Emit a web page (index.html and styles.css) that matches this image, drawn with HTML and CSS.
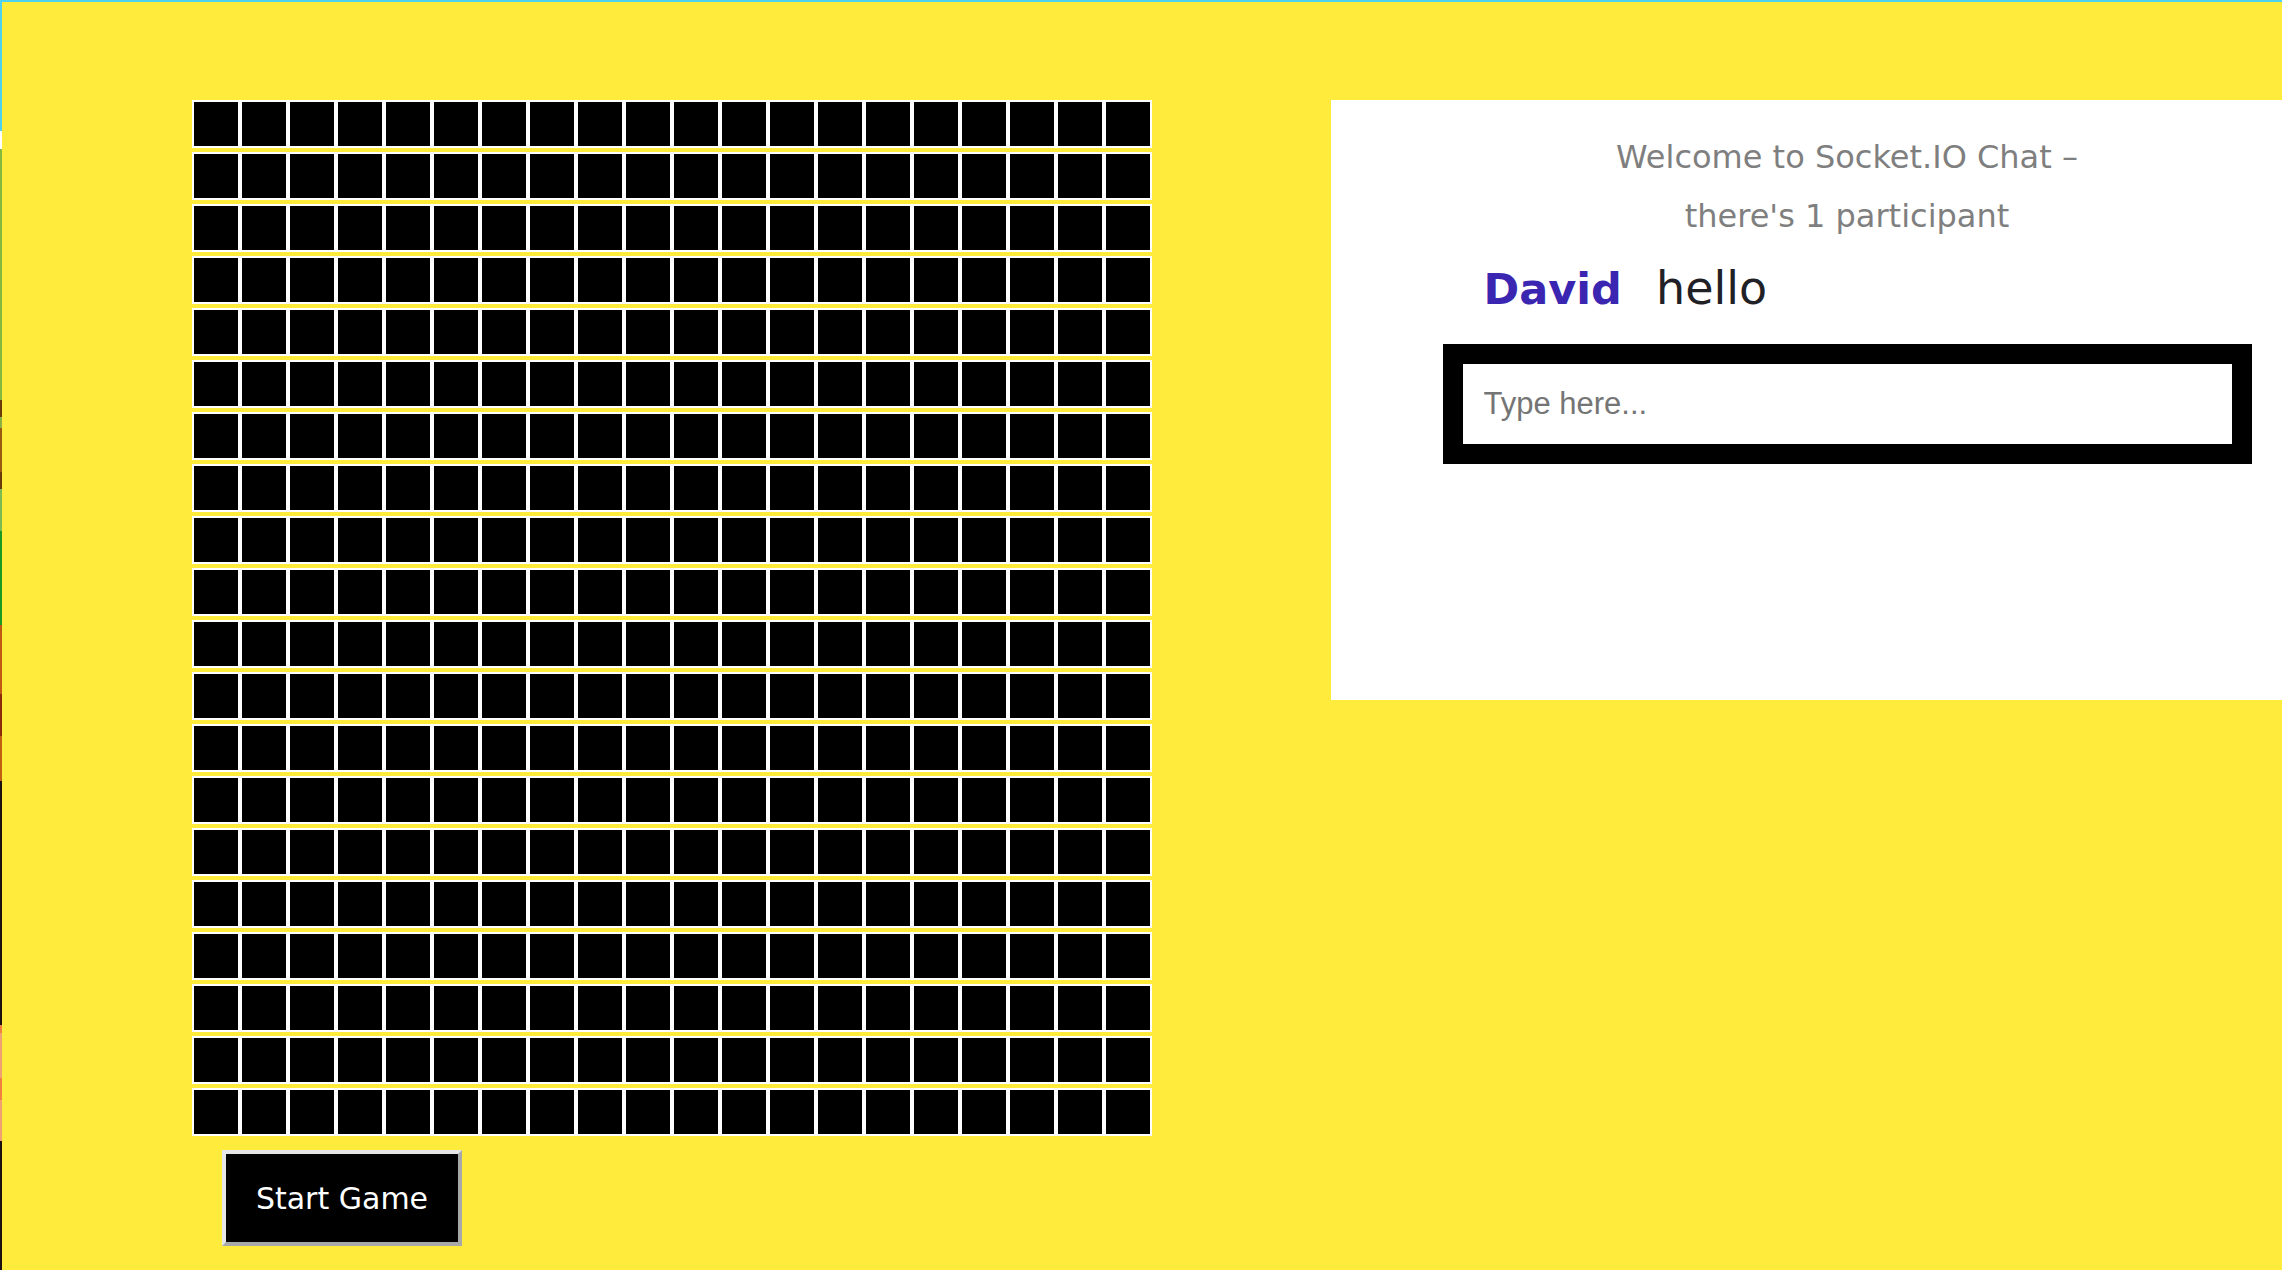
FILE: index.html
```html
<!DOCTYPE html>
<html lang="en">
<head>
<meta charset="utf-8">
<title>Game</title>
<link rel="stylesheet" href="styles.css">
</head>
<body>
<div class="page">
  <section class="game">
    <div class="board">
      <div class="row"><div class="cell"></div><div class="cell"></div><div class="cell"></div><div class="cell"></div><div class="cell"></div><div class="cell"></div><div class="cell"></div><div class="cell"></div><div class="cell"></div><div class="cell"></div><div class="cell"></div><div class="cell"></div><div class="cell"></div><div class="cell"></div><div class="cell"></div><div class="cell"></div><div class="cell"></div><div class="cell"></div><div class="cell"></div><div class="cell"></div></div>
      <div class="row"><div class="cell"></div><div class="cell"></div><div class="cell"></div><div class="cell"></div><div class="cell"></div><div class="cell"></div><div class="cell"></div><div class="cell"></div><div class="cell"></div><div class="cell"></div><div class="cell"></div><div class="cell"></div><div class="cell"></div><div class="cell"></div><div class="cell"></div><div class="cell"></div><div class="cell"></div><div class="cell"></div><div class="cell"></div><div class="cell"></div></div>
      <div class="row"><div class="cell"></div><div class="cell"></div><div class="cell"></div><div class="cell"></div><div class="cell"></div><div class="cell"></div><div class="cell"></div><div class="cell"></div><div class="cell"></div><div class="cell"></div><div class="cell"></div><div class="cell"></div><div class="cell"></div><div class="cell"></div><div class="cell"></div><div class="cell"></div><div class="cell"></div><div class="cell"></div><div class="cell"></div><div class="cell"></div></div>
      <div class="row"><div class="cell"></div><div class="cell"></div><div class="cell"></div><div class="cell"></div><div class="cell"></div><div class="cell"></div><div class="cell"></div><div class="cell"></div><div class="cell"></div><div class="cell"></div><div class="cell"></div><div class="cell"></div><div class="cell"></div><div class="cell"></div><div class="cell"></div><div class="cell"></div><div class="cell"></div><div class="cell"></div><div class="cell"></div><div class="cell"></div></div>
      <div class="row"><div class="cell"></div><div class="cell"></div><div class="cell"></div><div class="cell"></div><div class="cell"></div><div class="cell"></div><div class="cell"></div><div class="cell"></div><div class="cell"></div><div class="cell"></div><div class="cell"></div><div class="cell"></div><div class="cell"></div><div class="cell"></div><div class="cell"></div><div class="cell"></div><div class="cell"></div><div class="cell"></div><div class="cell"></div><div class="cell"></div></div>
      <div class="row"><div class="cell"></div><div class="cell"></div><div class="cell"></div><div class="cell"></div><div class="cell"></div><div class="cell"></div><div class="cell"></div><div class="cell"></div><div class="cell"></div><div class="cell"></div><div class="cell"></div><div class="cell"></div><div class="cell"></div><div class="cell"></div><div class="cell"></div><div class="cell"></div><div class="cell"></div><div class="cell"></div><div class="cell"></div><div class="cell"></div></div>
      <div class="row"><div class="cell"></div><div class="cell"></div><div class="cell"></div><div class="cell"></div><div class="cell"></div><div class="cell"></div><div class="cell"></div><div class="cell"></div><div class="cell"></div><div class="cell"></div><div class="cell"></div><div class="cell"></div><div class="cell"></div><div class="cell"></div><div class="cell"></div><div class="cell"></div><div class="cell"></div><div class="cell"></div><div class="cell"></div><div class="cell"></div></div>
      <div class="row"><div class="cell"></div><div class="cell"></div><div class="cell"></div><div class="cell"></div><div class="cell"></div><div class="cell"></div><div class="cell"></div><div class="cell"></div><div class="cell"></div><div class="cell"></div><div class="cell"></div><div class="cell"></div><div class="cell"></div><div class="cell"></div><div class="cell"></div><div class="cell"></div><div class="cell"></div><div class="cell"></div><div class="cell"></div><div class="cell"></div></div>
      <div class="row"><div class="cell"></div><div class="cell"></div><div class="cell"></div><div class="cell"></div><div class="cell"></div><div class="cell"></div><div class="cell"></div><div class="cell"></div><div class="cell"></div><div class="cell"></div><div class="cell"></div><div class="cell"></div><div class="cell"></div><div class="cell"></div><div class="cell"></div><div class="cell"></div><div class="cell"></div><div class="cell"></div><div class="cell"></div><div class="cell"></div></div>
      <div class="row"><div class="cell"></div><div class="cell"></div><div class="cell"></div><div class="cell"></div><div class="cell"></div><div class="cell"></div><div class="cell"></div><div class="cell"></div><div class="cell"></div><div class="cell"></div><div class="cell"></div><div class="cell"></div><div class="cell"></div><div class="cell"></div><div class="cell"></div><div class="cell"></div><div class="cell"></div><div class="cell"></div><div class="cell"></div><div class="cell"></div></div>
      <div class="row"><div class="cell"></div><div class="cell"></div><div class="cell"></div><div class="cell"></div><div class="cell"></div><div class="cell"></div><div class="cell"></div><div class="cell"></div><div class="cell"></div><div class="cell"></div><div class="cell"></div><div class="cell"></div><div class="cell"></div><div class="cell"></div><div class="cell"></div><div class="cell"></div><div class="cell"></div><div class="cell"></div><div class="cell"></div><div class="cell"></div></div>
      <div class="row"><div class="cell"></div><div class="cell"></div><div class="cell"></div><div class="cell"></div><div class="cell"></div><div class="cell"></div><div class="cell"></div><div class="cell"></div><div class="cell"></div><div class="cell"></div><div class="cell"></div><div class="cell"></div><div class="cell"></div><div class="cell"></div><div class="cell"></div><div class="cell"></div><div class="cell"></div><div class="cell"></div><div class="cell"></div><div class="cell"></div></div>
      <div class="row"><div class="cell"></div><div class="cell"></div><div class="cell"></div><div class="cell"></div><div class="cell"></div><div class="cell"></div><div class="cell"></div><div class="cell"></div><div class="cell"></div><div class="cell"></div><div class="cell"></div><div class="cell"></div><div class="cell"></div><div class="cell"></div><div class="cell"></div><div class="cell"></div><div class="cell"></div><div class="cell"></div><div class="cell"></div><div class="cell"></div></div>
      <div class="row"><div class="cell"></div><div class="cell"></div><div class="cell"></div><div class="cell"></div><div class="cell"></div><div class="cell"></div><div class="cell"></div><div class="cell"></div><div class="cell"></div><div class="cell"></div><div class="cell"></div><div class="cell"></div><div class="cell"></div><div class="cell"></div><div class="cell"></div><div class="cell"></div><div class="cell"></div><div class="cell"></div><div class="cell"></div><div class="cell"></div></div>
      <div class="row"><div class="cell"></div><div class="cell"></div><div class="cell"></div><div class="cell"></div><div class="cell"></div><div class="cell"></div><div class="cell"></div><div class="cell"></div><div class="cell"></div><div class="cell"></div><div class="cell"></div><div class="cell"></div><div class="cell"></div><div class="cell"></div><div class="cell"></div><div class="cell"></div><div class="cell"></div><div class="cell"></div><div class="cell"></div><div class="cell"></div></div>
      <div class="row"><div class="cell"></div><div class="cell"></div><div class="cell"></div><div class="cell"></div><div class="cell"></div><div class="cell"></div><div class="cell"></div><div class="cell"></div><div class="cell"></div><div class="cell"></div><div class="cell"></div><div class="cell"></div><div class="cell"></div><div class="cell"></div><div class="cell"></div><div class="cell"></div><div class="cell"></div><div class="cell"></div><div class="cell"></div><div class="cell"></div></div>
      <div class="row"><div class="cell"></div><div class="cell"></div><div class="cell"></div><div class="cell"></div><div class="cell"></div><div class="cell"></div><div class="cell"></div><div class="cell"></div><div class="cell"></div><div class="cell"></div><div class="cell"></div><div class="cell"></div><div class="cell"></div><div class="cell"></div><div class="cell"></div><div class="cell"></div><div class="cell"></div><div class="cell"></div><div class="cell"></div><div class="cell"></div></div>
      <div class="row"><div class="cell"></div><div class="cell"></div><div class="cell"></div><div class="cell"></div><div class="cell"></div><div class="cell"></div><div class="cell"></div><div class="cell"></div><div class="cell"></div><div class="cell"></div><div class="cell"></div><div class="cell"></div><div class="cell"></div><div class="cell"></div><div class="cell"></div><div class="cell"></div><div class="cell"></div><div class="cell"></div><div class="cell"></div><div class="cell"></div></div>
      <div class="row"><div class="cell"></div><div class="cell"></div><div class="cell"></div><div class="cell"></div><div class="cell"></div><div class="cell"></div><div class="cell"></div><div class="cell"></div><div class="cell"></div><div class="cell"></div><div class="cell"></div><div class="cell"></div><div class="cell"></div><div class="cell"></div><div class="cell"></div><div class="cell"></div><div class="cell"></div><div class="cell"></div><div class="cell"></div><div class="cell"></div></div>
      <div class="row"><div class="cell"></div><div class="cell"></div><div class="cell"></div><div class="cell"></div><div class="cell"></div><div class="cell"></div><div class="cell"></div><div class="cell"></div><div class="cell"></div><div class="cell"></div><div class="cell"></div><div class="cell"></div><div class="cell"></div><div class="cell"></div><div class="cell"></div><div class="cell"></div><div class="cell"></div><div class="cell"></div><div class="cell"></div><div class="cell"></div></div>
    </div>
    <button class="start" type="button">Start Game</button>
  </section>
  <section class="panel">
    <div class="chat">
      <p class="welcome">Welcome to Socket.IO Chat – there's 1 participant</p>
      <ul class="messages">
        <li class="message"><span class="user">David</span> <span class="body">hello</span></li>
      </ul>
      <form class="composer">
        <input class="input" type="text" placeholder="Type here...">
      </form>
    </div>
  </section>
</div>
</body>
</html>
```
FILE: styles.css
```css
html {
  background:
    linear-gradient(#4fd2ee, #4fd2ee) left top / 100% 2px no-repeat,
    linear-gradient(to bottom,
      #4fd2ee 0, #4fd2ee 131px,
      #ffffff 131px, #ffffff 149px,
      #86b83c 149px, #86b83c 400px,
      #6b3a0a 400px, #6b3a0a 417px,
      #8ab040 417px, #8ab040 428px,
      #9a5a10 428px, #9a5a10 472px,
      #6b3a0a 472px, #6b3a0a 489px,
      #7cbb50 489px, #7cbb50 531px,
      #1a9a20 531px, #1a9a20 625px,
      #c05a10 625px, #c05a10 694px,
      #8a2a08 694px, #8a2a08 736px,
      #c06010 736px, #c06010 781px,
      #1a1010 781px, #1a1010 1025px,
      #f08040 1025px, #f08040 1033px,
      #f0a070 1033px, #f0a070 1078px,
      #f08040 1078px, #f08040 1100px,
      #f0a070 1100px, #f0a070 1141px,
      #1a1010 1141px, #1a1010 1270px) left top / 2px 100% no-repeat,
    #ffeb3b;
  overflow: hidden;
}

body {
  margin: 0;
  overflow: hidden;
  height: 1270px;
}

.page {
  display: flex;
  align-items: flex-start;
  padding: 100px 0 0 192px;
}

.game {
  display: flex;
  flex-direction: column;
  align-items: flex-start;
  flex-shrink: 0;
}

.board {
  display: flex;
  flex-direction: column;
  gap: 4px;
  width: 960px;
}

.row {
  display: flex;
}

.cell {
  width: 44px;
  height: 44px;
  background: #000;
  border: 2px solid #fff;
}

.start {
  margin: 14px 0 0 30px;
  width: 240px;
  height: 96px;
  background: #000;
  color: #fff;
  font-family: "DejaVu Sans", sans-serif;
  font-size: 30px;
  border-style: solid;
  border-width: 4px;
  border-color: #e6e6e6 #a8a8a8 #a8a8a8 #e6e6e6;
  padding: 0;
  cursor: pointer;
}

.panel {
  flex-shrink: 0;
  margin-left: 179px;
  width: 1032px;
  height: 600px;
  background: #fff;
  box-sizing: border-box;
  padding-top: 28px;
}

.chat {
  width: 809px;
  margin: 0 auto;
}

.welcome {
  width: 520px;
  margin: 0 auto;
  text-align: center;
  font-family: "DejaVu Sans", sans-serif;
  font-size: 32px;
  line-height: 59px;
  color: #7f7f7f;
}

.messages {
  list-style: none;
  margin: 15px 0 0;
  padding: 0 0 0 41px;
}

.message {
  font-family: "DejaVu Sans", sans-serif;
  font-size: 45px;
  line-height: 54px;
  color: #1f2126;
}

.user {
  font-size: 43px;
  font-weight: bold;
  color: #3a26b0;
  margin-right: 20px;
}

.body {
  font-size: 46px;
}

.composer {
  margin: 28px 0 0;
  background: #000;
  padding: 20px;
}

.input {
  display: block;
  width: 100%;
  height: 80px;
  box-sizing: border-box;
  border: none;
  outline: none;
  padding: 0 21px;
  background: #fff;
  font-family: "Liberation Sans", Arial, sans-serif;
  font-size: 31px;
  color: #222;
}

.input::placeholder {
  color: #757575;
}
```
